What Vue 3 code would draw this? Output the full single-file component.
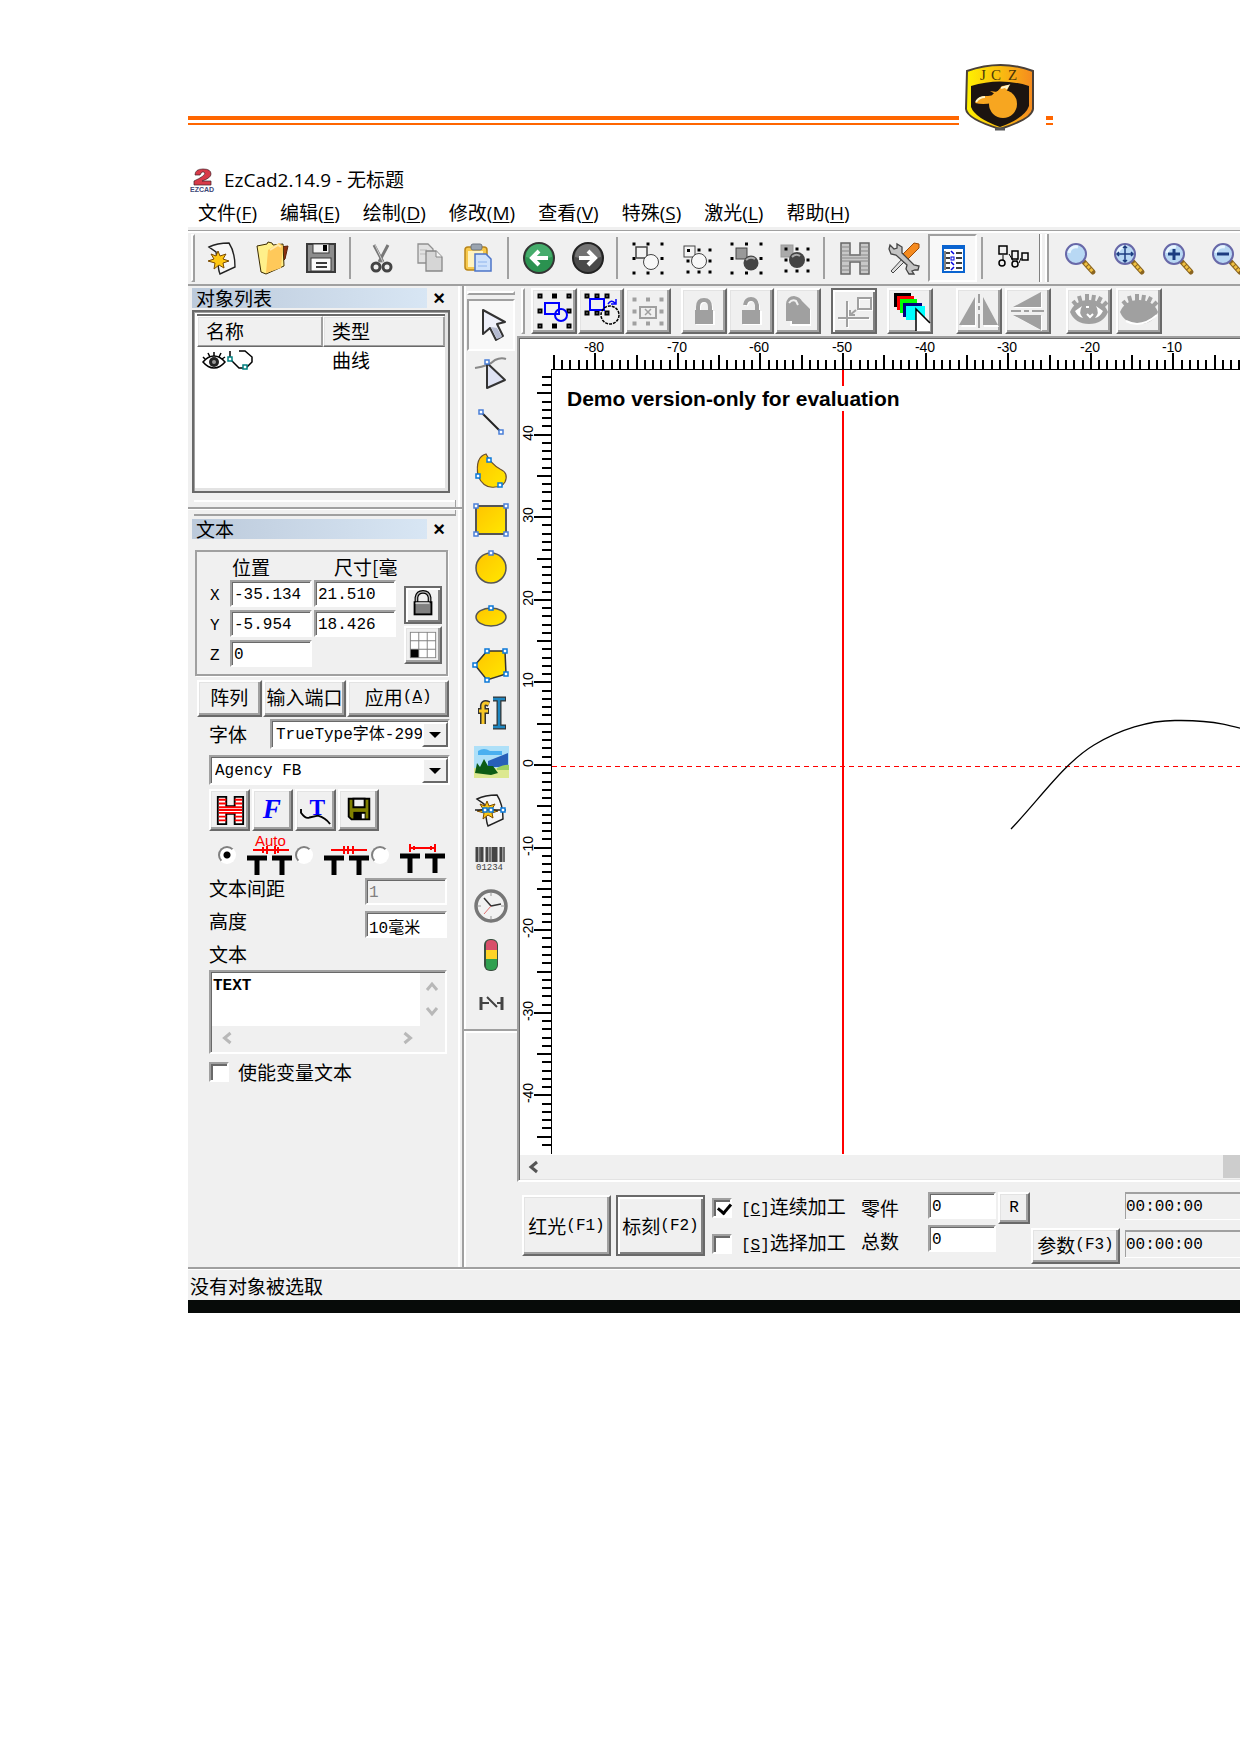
<script setup>
import { ref } from 'vue'

const square = (x, y, c = '#4a7fd8') =>
  `<rect x="${x - 2}" y="${y - 2}" width="4" height="4" fill="#fff" stroke="${c}" stroke-width="1.5"/>`
const dots = (x0, y0, x1, y1) => {
  const xs = [x0, (x0 + x1) / 2, x1]
  const ys = [y0, (y0 + y1) / 2, y1]
  let out = ''
  ys.forEach((y, r) => xs.forEach((x, c) => {
    if (r === 1 && c === 1) return
    out += `<rect x="${x - 1.5}" y="${y - 1.5}" width="3" height="3" fill="#000"/>`
  }))
  return out
}
const handles = (x0, y0, x1, y1, rows = 3) => {
  let out = ''
  const ys = rows === 3 ? [y0, (y0 + y1) / 2, y1] : [y0, y1]
  ys.forEach((y, r) => [x0, (x0 + x1) / 2, x1].forEach((x, c) => {
    if (r === 1 && c === 1 && rows === 3) return
    out += `<rect x="${x - 1.5}" y="${y - 1.5}" width="3" height="3" fill="#fff" stroke="#000" stroke-width="2"/>`
  }))
  return out
}
const star = '<path d="M11 11l2 5 6-2-3 5 6 2-6 2 1 5-5-3-5 4 1-6-7-2 6-2-3-5 5 2z" fill="#ffc814" stroke="#7a4a00" stroke-width="1"/>'
const page = '<path d="M2 5C8 2 16 1 22 1c4 6 6 14 6 24l-15 7-1-3-3-19z" fill="#f6f6f6" stroke="#222" stroke-width="1.4"/>'
const lens = (inner) =>
  `<path d="M20 20l9 10" stroke="#8a6420" stroke-width="5" stroke-linecap="round"/><path d="M21 21l8 9" stroke="#f0c040" stroke-width="3" stroke-dasharray="3 1"/><circle cx="12" cy="12" r="10" fill="#b8d8f4" stroke="#6868a8" stroke-width="2"/><path d="M5 11a7 7 0 0 1 9-6" stroke="#e8f6ff" stroke-width="3" fill="none"/>${inner}`
const padlock = (shackle) =>
  `<path d="${shackle}" fill="none" stroke="#fff" stroke-width="4" transform="translate(1 1)"/><rect x="8" y="16" width="19" height="14" fill="#fff"/><path d="${shackle}" fill="none" stroke="#a0a0a0" stroke-width="4"/><rect x="7" y="15" width="18" height="14" fill="#a0a0a0"/>`
const lashes = '<path d="M7 12L3 7M11 9L9 2M17 7V0M23 7l1-6M28 9l3-6M32 13l5-5" stroke="#a0a0a0" stroke-width="4"/>'
const floppy = (body, edge) =>
  `<path d="M2 2h28v28H2z" fill="${body}" stroke="${edge}" stroke-width="2"/><rect x="8" y="2" width="16" height="9" fill="#f2f2f2" stroke="${edge}"/><rect x="18" y="3" width="4" height="6" fill="#000"/><rect x="6" y="16" width="20" height="13" fill="#fafafa" stroke="${edge}"/><path d="M11 21h11M11 25h11" stroke="${edge}" stroke-width="2"/>`

const icons = {
  new: page + `<g transform="translate(0 -2)">${star}</g>`,
  open: '<path d="M24 5l8-1-3 13-6 6z" fill="#8a3010" stroke="#5a2008"/><path d="M1 4l10-2 1-2 4 1 1 2 10-1 1 22-18 8-5-2z" fill="#fff08a" stroke="#3a2a00"/><path d="M12 8l11-7 4 3-2 22-15 5z" fill="#ffc95a"/><path d="M14 8l8-5 3 2" stroke="#ffe9a8" stroke-width="2" fill="none"/>',
  save: floppy('#8c8c8c', '#3a3a3a'),
  cut: '<path d="M9 3l9 17M23 3l-9 17" stroke="#777" stroke-width="3"/><path d="M10 3l8 17" stroke="#ccc"/><circle cx="11" cy="25" r="4" fill="none" stroke="#444" stroke-width="3"/><circle cx="22" cy="25" r="4" fill="none" stroke="#444" stroke-width="3"/>',
  copy: '<path d="M4 2h10l5 5v14H4z" fill="#e2e2e2" stroke="#909090" stroke-width="1.3"/><path d="M6 8h7M6 12h7" stroke="#bbb"/><path d="M12 9h10l6 6v14H12z" fill="#d6d6d6" stroke="#888" stroke-width="1.3"/><path d="M22 9v6h6" fill="#f4f4f4" stroke="#888"/>',
  paste: '<rect x="2" y="5" width="22" height="23" rx="3" fill="#f7c94e" stroke="#b98518" stroke-width="1.5"/><rect x="5" y="9" width="15" height="16" fill="#fff3c0"/><rect x="8" y="2" width="11" height="6" rx="2" fill="#9aa4b0" stroke="#6c7480"/><path d="M12 12h11l5 5v12H12z" fill="#cfe2fb" stroke="#4c74c8" stroke-width="1.5"/><path d="M15 20h9M15 24h9" stroke="#8fb4ec"/>',
  back: '<circle cx="16" cy="16" r="15" fill="#2b9250" stroke="#333" stroke-width="2"/><path d="M3 15a13 13 0 0 1 26 0q-13 4-26 0" fill="#52b878" opacity=".7"/><path d="M25 16H10M16 9l-7 7 7 7" fill="none" stroke="#fff" stroke-width="4"/>',
  forward: '<circle cx="16" cy="16" r="15" fill="#4a4a4a" stroke="#222" stroke-width="2"/><path d="M3 15a13 13 0 0 1 26 0q-13 4-26 0" fill="#858585" opacity=".7"/><path d="M7 16h15M16 9l7 7-7 7" fill="none" stroke="#fff" stroke-width="4"/>',
  group1: dots(2, 2, 30, 31) + '<rect x="4" y="5" width="11" height="11" fill="#f4f4f4" stroke="#444" stroke-width="1.5"/><circle cx="19" cy="20" r="7.5" fill="#f8f8f8" stroke="#444"/>',
  group2: dots(7, 8, 29, 30) + '<rect x="3" y="4" width="11" height="11" fill="#f4f4f4" stroke="#444"/><rect x="6" y="7" width="3" height="3"/><circle cx="18" cy="19" r="7.5" fill="#f8f8f8" stroke="#444"/>',
  group3: dots(2, 2, 31, 31) + '<rect x="6" y="6" width="11" height="11" fill="#999" stroke="#444"/><circle cx="21" cy="21" r="7.5" fill="#444"/><path d="M16 18q4-4 9-1" stroke="#aaa" stroke-width="2" fill="none"/>',
  group4: '<rect x="2" y="3" width="12" height="12" fill="#aaa" stroke="#999"/><circle cx="18" cy="18" r="8" fill="#444"/><path d="M13 15q4-4 8-1" stroke="#aaa" stroke-width="2" fill="none"/>' + dots(7, 7, 29, 29),
  hatch: '<path d="M2 1h9v12h10V1h9v31h-9V20H11v12H2z" fill="#c8c8c8" stroke="#666" stroke-width="1.5"/><path d="M2 5h9M2 9h9M21 5h9M21 9h9M2 13h28M2 16h28M2 19h28M2 24h9M2 28h9M21 24h9M21 28h9" stroke="#888"/>',
  tools: '<path d="M31 2l-5-1-12 12 5 5L31 6z" fill="#f58a1e" stroke="#9c4c08"/><path d="M15 16L3 29l2 2 13-13" fill="#ddd" stroke="#444"/><path d="M2 3l4 4 3-1V2l5 3v6l12 12 5 1-1 4h-3l-3 1 2 3h-5l-3-5 1-4L8 13l-5-1-2-5z" fill="#c4c4c4" stroke="#444" stroke-width="1.3"/>',
  list: '<rect x="6" y="4" width="21" height="26" fill="#fff" stroke="#0a64d0" stroke-width="2"/><rect x="5" y="3" width="23" height="4" fill="#0a64d0"/><path d="M9 11h4M9 16h4M9 21h4M9 26h4M19 11h6M19 16h6M19 21h6M19 26h6" stroke="#000" stroke-width="1.5"/><path d="M8 9v19" stroke="#000"/><path d="M14 9l3 3M14 20l3 3M17 25l-3 3" stroke="#0000e0" stroke-width="1.5"/><rect x="14" y="15" width="3" height="3" fill="#fff" stroke="#0000e0"/>',
  nodes: '<g fill="#f0f0f0" stroke="#000" stroke-width="1.5"><path d="M6 13v7M12 12l6 10M20 16v5M24 16l-2 5" stroke-width="1"/><rect x="2" y="4" width="8" height="8"/><rect x="15" y="9" width="6" height="8"/><rect x="25" y="11" width="6" height="7"/><circle cx="5" cy="21" r="3"/><circle cx="18" cy="22" r="3"/></g>',
  zoom: lens(''),
  zoomAll: lens('<path d="M12 4v16M4 12h16M10 6l2-2 2 2M10 18l2 2 2-2M6 10l-2 2 2 2M18 10l2 2-2 2" stroke="#1c3c80" stroke-width="1.5" fill="none"/>'),
  zoomIn: lens('<path d="M12 7v11M6 12h12" stroke="#1c3c80" stroke-width="3"/>'),
  zoomOut: lens('<path d="M6 12h12" stroke="#1c3c80" stroke-width="3"/>'),
  sel1: handles(2, 1, 31, 31) + '<g fill="none" stroke="#0000ff" stroke-width="2"><rect x="7" y="8" width="14" height="11"/><circle cx="23" cy="20" r="6"/></g>',
  sel2: handles(2, 1, 22, 18, 2) + '<rect x="5" y="4" width="14" height="11" fill="#f0f0f0" stroke="#0000ff" stroke-width="2"/><circle cx="25" cy="20" r="9" fill="none" stroke="#000" stroke-width="1.5" stroke-dasharray="3 1"/><path d="M23 9q3-5 7-1M31 4v5h-5" stroke="#0000ff" stroke-width="1.5" fill="none"/>',
  sel3: dots(2, 4, 29, 28).replaceAll('#000', '#a0a0a0').replaceAll('width="3" height="3"', 'width="4" height="4"') + '<rect x="8" y="12" width="16" height="11" fill="#f0f0f0" stroke="#a0a0a0" stroke-width="2"/><path d="M13 14l6 6M19 14l-6 6" stroke="#a0a0a0" stroke-width="1.5"/>',
  lock: padlock('M10 16v-4q0-7 6-7t6 7v4'),
  unlock: padlock('M10 10q1-6 6-6t6 6v6'),
  unlockAll: '<path d="M9 15V8q0-5 5-5 4 0 6 3l9 9v16H8z" fill="#fff"/><path d="M4 13V9q1-8 8-8 6 1 8 5l8 8v15H10v-3H4z" fill="#a0a0a0"/><path d="M7 8q3-4 7-2l2 4" stroke="#f0f0f0" fill="none" stroke-width="2"/>',
  origin: '<g stroke="#fff" stroke-width="2" fill="none" transform="translate(1 1)"><path d="M0 23h31M9 6v26M20 3h13v11H20z"/></g><g stroke="#a0a0a0" stroke-width="2" fill="none"><path d="M0 23h31M9 6v26M20 3h13v11H20zM18 15l-6 5M12 15v5h5"/></g>',
  layers: '<path d="M0-2h17v14H0z"/><path d="M3 1h17v14H3z" fill="#f00"/><path d="M6 4h17v14H6z" fill="#0f0"/><path d="M9 8h19v14H9z" fill="#000080"/><path d="M12 11h19v14H12z" fill="#0ff"/><path d="M22 14v22h14v-8z" fill="#fff"/><path d="M22 36V14l14 14" stroke="#000" stroke-width="1.5" fill="none"/>',
  mirrorH: '<g transform="translate(1 1)" fill="#fff"><path d="M12 3v28H-3zM20 3v28h15z"/></g><path d="M12 2v28H-4zM20 2v28h15z" fill="#a0a0a0"/><path d="M16-1v9m0 3v4m0 4v14" stroke="#a0a0a0" stroke-width="2"/>',
  mirrorV: '<g transform="translate(1 1)" fill="#fff"><path d="M29 12V-3L1 12zM29 20v15L1 20z"/></g><path d="M29 12V-3L1 12zM29 20v15L1 20z" fill="#a0a0a0"/><path d="M-1 16h10m3 0h5m3 0h12" stroke="#a0a0a0" stroke-width="2"/>',
  eye: `<g transform="translate(-3 -1)"><path d="M0 18q5-12 19-12t19 12q-5 12-19 12T0 18z" fill="#a0a0a0"/><path d="M5 17l7-5q-4 7 1 12-5-1-8-7zM33 17l-7-5q4 7-1 12 5-1 8-7z" fill="#fff"/><path d="M16 13h3M17 20l3 3 3-3" stroke="#fff" stroke-width="2" fill="none"/>${lashes}</g>`,
  eyeOff: `<g transform="translate(-3 -1)"><path d="M0 18q5-12 19-12t19 12q-5 12-19 12T0 18z" fill="#a0a0a0"/><path d="M6 27q15 8 31-6" stroke="#fff" stroke-width="2" fill="none"/>${lashes}</g>`,
  arrow: '<path d="M8 1l22 12-8 2 6 12-7 4-6-12-7 6z" fill="#eef0fa" stroke="#333" stroke-width="2" stroke-linejoin="round"/><path d="M16 18l6 1 5 9-5 2z" fill="#b4bad0"/>',
  node: '<path d="M0 9q14-2 20-8 6-3 11-1" fill="none" stroke="#888" stroke-width="2"/><path d="M12 4v25l18-8z" fill="#dfe3f4" stroke="#333" stroke-width="2" stroke-linejoin="round"/>' + square(12, 3),
  line: '<path d="M6 4l20 20" stroke="#222" stroke-width="2"/>' + square(6, 4) + square(26, 24),
  curve: '<path d="M11-2q5 10 14 15 9 4 5 13-3 5-10 5-11 2-17-11Q0 1 11-2z" fill="url(#gold)" stroke="#6a5030" stroke-width="1.2"/>' + square(14, 4, '#0a78d8') + square(3, 20, '#0a78d8') + square(25, 29, '#0a78d8'),
  rect: '<rect x="1" y="2" width="30" height="28" fill="url(#gold)" stroke="#555" stroke-width="2"/>' + square(1, 2) + square(31, 2) + square(1, 30) + square(31, 30),
  circle: '<circle cx="16" cy="16" r="15" fill="url(#gold)" stroke="#555" stroke-width="1.5"/>' + square(16, 1),
  ellipse: '<ellipse cx="16" cy="16" rx="15" ry="9" fill="url(#gold)" stroke="#555" stroke-width="1.5"/>' + square(16, 7, '#0a78d8'),
  polygon: '<path d="M12 2l18 0 1 23-19 6L0 16z" fill="url(#gold)" stroke="#333" stroke-width="1.5"/>' + square(12, 2, '#0a78d8') + square(30, 2, '#0a78d8') + square(31, 25, '#0a78d8') + square(12, 31, '#0a78d8') + square(0, 16, '#0a78d8'),
  text: '<path d="M14 7q-7-3-6 4v16M3 14h11" fill="none" stroke="#333" stroke-width="6"/><path d="M14 7q-7-3-6 4v16M4 14h9" fill="none" stroke="#f8c828" stroke-width="3"/><path d="M18 2h13M18 30h13M24 2v28" stroke="#333" stroke-width="5"/><path d="M18 2h12M18 30h12M24 2v28" stroke="#1e86c0" stroke-width="2.5"/>',
  picture: '<rect x="-1" width="35" height="32" fill="#aee0f8"/><path d="M3 5q6-4 12 0h12v4H3z" fill="#4ab0f0"/><path d="M13 15l20-8v14H13z" fill="#2860b8"/><path d="M-1 22h35v10H-1z" fill="#dce890"/><path d="M0 27L2 17l3 4 4-8 4 7 5 0 5 7-7 2z" fill="#0c5c14"/><path d="M22 22q8-4 12-3v5H22z" fill="#9cd060"/>',
  vector: page + `<g transform="translate(1 -4)">${star}</g><path d="M0 16h31" stroke="#222" stroke-width="1.5"/>` + square(10, 16, '#0a78d8') + square(16, 16, '#0a78d8') + square(28, 16, '#0a78d8'),
  barcode: '<path d="M2 5v15M7 5v15M12 5v15M18 5v15M21 5v15M26 5v15" stroke="#444" stroke-width="3"/><path d="M5 5v15M15 5v15M29 5v15" stroke="#444" stroke-width="1.5"/><text x="1" y="28" font-family="Liberation Mono" font-size="9" fill="#444">01234</text>',
  clock: '<circle cx="16" cy="16" r="15" fill="#f2f2f2" stroke="#777" stroke-width="3.5"/><path d="M16 3v3M16 26v3M3 16h3M26 16h3" stroke="#999"/><path d="M16 16L9 8M16 16l10-2" stroke="#333" stroke-width="1.5"/><path d="M16 16l-7 8" stroke="#e07070"/>',
  light: '<rect x="9" y="0" width="14" height="32" rx="6" fill="#3a5040"/><path d="M11 11V5q0-4 5-4t6 4v6z" fill="#d8506a"/><path d="M11 11h11v9H11z" fill="#ffd428"/><path d="M11 20h11v6q0 5-6 5t-5-5z" fill="#30a050"/>',
  output: '<path d="M6 10v13M27 10v13" stroke="#444" stroke-width="3"/><path d="M6 16h8M12 10l10 10M22 16h5" stroke="#444" stroke-width="2" fill="none"/>',
  hatchRed: '<path d="M3 2h9v10h9V2h9v29h-9V20h-9v11H3z" fill="#fff" stroke="#000" stroke-width="2"/><path d="M4 5h8M4 9h8M21 5h8M21 9h8M4 13h25M4 16h25M4 19h25M4 23h8M4 27h8M21 23h8M21 27h8" stroke="#f00" stroke-width="2"/>',
  font: '<text x="5" y="25" font-family="Liberation Serif" font-size="29" font-weight="bold" font-style="italic" fill="#00f">F</text>',
  curveText: '<text x="9" y="21" font-family="Liberation Serif" font-size="25" font-weight="bold" fill="#00f">T</text><path d="M0 15v4q5 7 9 5l9-2q8 2 13 9" fill="none" stroke="#000" stroke-width="2"/>',
  saveSmall: '<path d="M5 4h22v22H8l-3-3z" fill="#808000" stroke="#000" stroke-width="2"/><path d="M10 4h12v9H10z" fill="#f0f0f0" stroke="#000" stroke-width="2"/><path d="M10 18h13v8H10z"/><path d="M19 20h3v5h-3z" fill="#fff"/>',
  padlock: '<path d="M9 13V8q1-6 7-6t7 6v5" fill="none" stroke="#000" stroke-width="4"/><path d="M9 13V8q1-6 7-6t7 6v5" fill="none" stroke="#bbb" stroke-width="1.5"/><rect x="7" y="13" width="18" height="13" fill="#808080" stroke="#000" stroke-width="2"/><path d="M8 13h15v2H8z" fill="#ccc"/>',
  anchor: '<path d="M2 2h28v28H2z" fill="#808080"/><path d="M3 3h8v8H3zM12 3h8v8h-8zM21 3h8v8h-8zM3 12h8v8H3zM12 12h8v8h-8zM21 12h8v8h-8zM12 21h8v8h-8zM21 21h8v8h-8z" fill="#fff"/><path d="M3 21h8v8H3z"/>'
}

const menus = [
  ['文件', 'F'], ['编辑', 'E'], ['绘制', 'D'], ['修改', 'M'],
  ['查看', 'V'], ['特殊', 'S'], ['激光', 'L'], ['帮助', 'H']
]
const mainTools = [
  ['new', 'open', 'save'], ['cut', 'copy', 'paste'], ['back', 'forward'],
  ['group1', 'group2', 'group3', 'group4'], ['hatch', 'tools', 'list'], ['nodes']
]
const zoomTools = ['zoom', 'zoomAll', 'zoomIn', 'zoomOut']
const viewTools = [
  ['sel1', 'sel2', 'sel3'], ['lock', 'unlock', 'unlockAll'], ['origin'], ['layers'],
  ['mirrorH', 'mirrorV'], ['eye', 'eyeOff']
]
const drawTools = ['arrow', 'node', 'line', 'curve', 'rect', 'circle', 'ellipse', 'polygon',
  'text', 'picture', 'vector', 'barcode', 'clock', 'light', 'output']
const fontTools = ['hatchRed', 'font', 'curveText', 'saveSmall']

const tickLength = (n, long) => (n % 10 === 0 ? long : n % 5 === 0 ? 14 : 9)
const xTicks = Array.from({ length: 85 }, (_, i) => {
  const n = i - 85
  return { n, x: Math.round(324 + (n + 50) * 8.26), len: tickLength(n, 16) }
})
const yTicks = Array.from({ length: 94 }, (_, i) => {
  const n = 47 - i
  return { n, y: Math.round(427 - n * 8.26), len: tickLength(n, 17) }
})
const tens = (ticks) => ticks.filter((t) => t.n % 10 === 0)

const spacing = ref('auto')
const variableText = ref(false)
const continuous = ref(true)
const selected = ref(false)
const content = ref('TEXT')
</script>

<template>
  <div class="page">
    <svg class="defs" aria-hidden="true">
      <linearGradient id="gold" x1="0" y1="0" x2="1" y2="1">
        <stop offset="0" stop-color="#ffc400" /><stop offset="1" stop-color="#ffe800" />
      </linearGradient>
      <linearGradient id="shield" x1="0" y1="0" x2="1" y2="0">
        <stop offset="0" stop-color="#fff200" /><stop offset="1" stop-color="#f58a1f" />
      </linearGradient>
    </svg>

    <header class="letterhead">
      <div class="rule long"></div>
      <svg class="logo" viewBox="0 0 70 68">
        <path d="M2 8Q36-4 68 8v38q-1 10-33 20Q2 56 1 46z" fill="url(#shield)" stroke="#4a4038" stroke-width="2" />
        <path d="M6 23Q35 14 64 23v20q-4 12-29 21Q10 55 6 44z" fill="#1c1410" />
        <path d="M30 66h10" stroke="#555" stroke-width="3" />
        <text x="15" y="17" font-family="Liberation Serif" font-size="15" fill="#4a3608">J</text>
        <text x="26" y="17" font-family="Liberation Serif" font-size="15" fill="#4a3608">C</text>
        <text x="43" y="17" font-family="Liberation Serif" font-size="15" fill="#4a3608">Z</text>
        <circle cx="38" cy="41" r="14" fill="#f7a620" />
        <path d="M10 40q4-8 13-7l7-1-3 8q-9 2-17 0zM25 28l7 1 5-6 7-1q-1 6-5 8l-7 2z" fill="#f7a620" />
        <path d="M11 39q3-5 9-5M36 25l7-2-2 3" stroke="#fff4c8" stroke-width="2" fill="none" />
      </svg>
      <div class="rule tail"></div>
    </header>

    <main class="app">
      <div class="title">
        <svg class="brand" viewBox="0 0 26 26">
          <path d="M5 8q0-6 8-6 8 0 8 5 0 4-9 7h9v4H4v-4q11-5 11-8-3-3-5 2z" fill="#d83a48" stroke="#402028" stroke-width=".7" />
          <text x="0" y="25" font-family="Liberation Sans" font-size="7" font-weight="bold" fill="#404878">EZCAD</text>
        </svg>
        <span>EzCad2.14.9 - 无标题</span>
      </div>
      <nav class="menu">
        <button v-for="[name, key] in menus" :key="key">{{ name }}(<u>{{ key }}</u>)</button>
      </nav>

      <div class="toolbar">
        <i class="grip"></i>
        <div v-for="(group, g) in mainTools" :key="g" class="group">
          <button v-for="name in group" :key="name" class="flat" :class="{ pressed: name === 'list' }" :aria-label="name">
            <svg class="icon" viewBox="0 0 32 32" v-html="icons[name]"></svg>
          </button>
        </div>
        <i class="band"></i>
        <button v-for="name in zoomTools" :key="name" class="flat" :aria-label="name">
          <svg class="icon" viewBox="0 0 32 32" v-html="icons[name]"></svg>
        </button>
      </div>

      <div class="workspace">
        <aside class="side">
          <div class="caption"><h2>对象列表</h2><button aria-label="close">×</button></div>
          <div class="list">
            <table>
              <thead><tr><th>名称</th><th>类型</th></tr></thead>
              <tbody>
                <tr>
                  <td>
                    <svg class="object" viewBox="0 0 52 22">
                      <path d="M1 12q5-6 11-6t11 6q-5 6-11 6T1 12z" fill="#fff" stroke="#000" stroke-width="1.5" />
                      <path d="M3 9L1 7M8 7L6 3M12 6V2M17 7l2-4M20 9l3-2" stroke="#000" stroke-width="1.5" />
                      <circle cx="12" cy="12" r="5" fill="#222" /><circle cx="12" cy="12" r="2" fill="#999" />
                      <path d="M28 1v8l9 9h7l6-6V7l-7-6h-6" fill="none" stroke="#000" stroke-width="1.5" />
                      <path d="M26 7h4v4h-4zM41 15h4v4h-4z" fill="#fff" stroke="#008080" stroke-width="1.5" />
                    </svg>
                  </td>
                  <td>曲线</td>
                </tr>
              </tbody>
            </table>
          </div>
          <div class="splitter"></div>
          <div class="caption"><h2>文本</h2><button aria-label="close">×</button></div>

          <section class="place">
            <div class="coords">
              <span class="c2">位置</span><span class="c3">尺寸[毫</span>
              <label for="px">X</label><input id="px" class="field" value="-35.134"><input class="field" aria-label="width" value="21.510">
              <label for="py">Y</label><input id="py" class="field" value="-5.954"><input class="field" aria-label="height" value="18.426">
              <label for="pz">Z</label><input id="pz" class="field" value="0">
            </div>
            <div class="locks">
              <button class="push default" aria-label="lock"><svg viewBox="0 0 32 32" v-html="icons.padlock"></svg></button>
              <button class="push" aria-label="anchor"><svg viewBox="0 0 32 32" v-html="icons.anchor"></svg></button>
            </div>
          </section>

          <div class="actions">
            <button class="push">阵列</button>
            <button class="push">输入端口</button>
            <button class="push">应用<span class="mono">(<u>A</u>)</span></button>
          </div>

          <div class="form">
            <div class="typeface">
              <label for="kind">字体</label>
              <div class="combo kind"><select id="kind"><option>TrueType字体-299</option></select><span class="drop"><i></i></span></div>
            </div>
            <div class="combo face"><select aria-label="font"><option>Agency FB</option></select><span class="drop"><i></i></span></div>
            <div class="fonttools">
              <button v-for="name in fontTools" :key="name" class="push" :aria-label="name">
                <svg viewBox="0 0 32 32" v-html="icons[name]"></svg>
              </button>
            </div>
            <div class="spacings">
              <label>
                <input v-model="spacing" type="radio" value="auto" aria-label="auto">
                <svg viewBox="0 0 46 44">
                  <text x="8" y="13" font-family="Liberation Sans" font-size="15" fill="#f00">Auto</text>
                  <path d="M6 17h36M20 13v8M28 13v8M16 14v6M31 14v6" stroke="#f00" stroke-width="2" />
                  <path d="M0 25h20M25 25h20M10 25v17M35 25v17" stroke="#000" stroke-width="5" />
                </svg>
              </label>
              <label>
                <input v-model="spacing" type="radio" value="edge" aria-label="edge">
                <svg viewBox="0 0 46 44">
                  <path d="M7 17h36M20 13v8M24 13v8M29 13v8" stroke="#f00" stroke-width="2" />
                  <path d="M0 25h20M25 25h20M10 25v17M35 25v17" stroke="#000" stroke-width="5" />
                </svg>
              </label>
              <label>
                <input v-model="spacing" type="radio" value="center" aria-label="center">
                <svg viewBox="0 0 46 44">
                  <path d="M10 15h25M10 11v8M35 11v8M14 13v4M31 13v4" stroke="#f00" stroke-width="2" />
                  <path d="M0 23h20M25 23h20M10 23v17M35 23v17" stroke="#000" stroke-width="5" />
                </svg>
              </label>
            </div>
            <div class="row"><label for="gap">文本间距</label><input id="gap" class="field" value="1" disabled></div>
            <div class="row"><label for="high">高度</label><input id="high" class="field" value="10毫米"></div>
            <label class="textlabel" for="content">文本</label>
            <div class="editor">
              <textarea id="content" v-model="content" wrap="off"></textarea>
              <svg class="vbar" viewBox="0 0 25 54"><path d="M7 18l5-6 5 6M7 36l5 6 5-6" /></svg>
              <svg class="hbar" viewBox="0 0 232 26"><path d="M18 7l-6 5 6 5M192 7l6 5-6 5" /></svg>
            </div>
            <label class="check"><input v-model="variableText" type="checkbox">使能变量文本</label>
          </div>
        </aside>

        <div class="palette">
          <div class="strip">
            <i></i>
            <div class="tools">
              <button v-for="name in drawTools" :key="name" :class="{ pressed: name === 'arrow' }" :aria-label="name">
                <svg class="icon" viewBox="0 0 32 32" v-html="icons[name]"></svg>
              </button>
            </div>
          </div>
        </div>

        <div class="stage">
          <div class="viewbar">
            <i class="grip"></i>
            <div v-for="(group, g) in viewTools" :key="g" :class="['set', 'set' + g]">
              <button v-for="name in group" :key="name" class="push" :class="{ default: name === 'origin' }" :aria-label="name">
                <svg class="icon" viewBox="0 0 32 32" v-html="icons[name]"></svg>
              </button>
            </div>
          </div>
          <div class="canvas">
            <svg class="drawing">
              <path d="M32 31H2000M32 31V816" stroke="#000" fill="none" stroke-width="1" shape-rendering="crispEdges" />
              <g stroke="#000" stroke-width="2" shape-rendering="crispEdges">
                <line v-for="t in xTicks" :key="'x' + t.n" :x1="t.x" :x2="t.x" :y1="31 - t.len" y2="31" />
                <line v-for="t in yTicks" :key="'y' + t.n" :x1="32 - t.len" x2="32" :y1="t.y" :y2="t.y" />
              </g>
              <g class="digits">
                <text v-for="t in tens(xTicks)" :key="t.n" :x="t.x - 1" y="14">{{ t.n }}</text>
                <text v-for="t in tens(yTicks)" :key="'v' + t.n" :transform="`translate(14 ${t.y - 2}) rotate(-90)`">{{ t.n }}</text>
              </g>
              <path d="M324 32V816" stroke="#f00" stroke-width="2" />
              <path d="M33 428H2000" stroke="#f00" stroke-width="1" stroke-dasharray="5 4" shape-rendering="crispEdges" />
              <rect x="46" y="48" width="342" height="25" fill="#fff" />
              <text class="demo" x="48" y="68">Demo version-only for evaluation</text>
              <path d="M492 491C520 462 545 425 575 407C600 392 630 382 658 382.500C700 382 715 388 760 402" fill="none" stroke="#000" stroke-width="1.3" />
            </svg>
            <div class="scroll"><svg viewBox="0 0 24 24"><path d="M17 7l-6 5 6 5" /></svg><i></i></div>
          </div>
          <div class="control">
            <button class="push big">红光<span class="mono">(F1)</span></button>
            <button class="push big default">标刻<span class="mono">(F2)</span></button>
            <div class="modes">
              <label class="check"><input v-model="continuous" type="checkbox"><span><span class="mono">[<u>C</u>]</span>连续加工</span></label>
              <label class="check"><input v-model="selected" type="checkbox"><span><span class="mono">[<u>S</u>]</span>选择加工</span></label>
            </div>
            <div class="counts">
              <div><label for="parts">零件</label><input id="parts" class="field" value="0"></div>
              <div><label for="total">总数</label><input id="total" class="field" value="0"></div>
            </div>
            <div class="extras">
              <button class="push reset mono">R</button>
              <button class="push params">参数<span class="mono">(F3)</span></button>
            </div>
            <div class="times"><output>00:00:00</output><output>00:00:00</output></div>
          </div>
        </div>
      </div>
      <footer class="status">没有对象被选取</footer>
    </main>
  </div>
</template>

<style>
body { margin: 0; background: #fff; }
</style>

<style scoped>
* { box-sizing: border-box; }
.page {
  padding-left: 188px;
  overflow: hidden;
  color: #000;
  font: 19px/20px "Noto Sans CJK SC", sans-serif;
}
button, input, select, textarea { font: inherit; color: inherit; padding: 0; margin: 0; border-radius: 0; }
button { display: flex; align-items: center; justify-content: center; border: 0; background: none; white-space: nowrap; }
svg { display: block; overflow: visible; flex: none; }
.defs { position: absolute; width: 0; height: 0; }
.mono { font: 16px/20px "Liberation Mono", monospace; }

.letterhead { display: flex; margin-right: 187px; padding-top: 63px; height: 165px; }
.rule { height: 9px; margin-top: 53px; border-top: 4px solid #ff6600; border-bottom: 2px solid #ff6600; }
.long { flex: 1; }
.tail { width: 7px; }
.logo { width: 70px; height: 68px; margin: 0 11px 0 6px; }

.title, .menu { font-family: "Open Sans", "Noto Sans CJK SC", sans-serif; }
.title { display: flex; align-items: center; gap: 8px; height: 30px; padding-left: 2px; }
.brand { width: 26px; height: 26px; }
.menu { display: flex; align-items: center; gap: 23px; height: 32px; padding: 4px 0 0 10px; }
.menu u { text-underline-offset: 2px; }

.toolbar {
  display: flex; align-items: center; height: 59px;
  background: #f0f0f0; border-bottom: 2px solid #a0a0a0;
  box-shadow: inset 0 3px #f0f0f0, inset 0 4px #a0a0a0, inset 0 6px #fff;
  padding-top: 4px; overflow: hidden;
}
.grip { flex: none; width: 4px; border: 2px solid; border-color: #fff #a0a0a0 #a0a0a0 #fff; }
.toolbar .grip { height: 48px; margin: 0 3px; }
.group { display: flex; align-items: center; }
.group + .group::before { content: ""; width: 2px; height: 42px; margin: 0 5px 0 4px; background: #a0a0a0; }
.flat { width: 49px; height: 48px; flex: none; }
.icon { width: 32px; height: 32px; }
.pressed { background: #f8f8f8; border: 2px solid; border-color: #a0a0a0 #fff #fff #a0a0a0; }
.band { flex: none; width: 10px; height: 48px; margin: 0 6px 0 2px; border-left: 1px solid #808080; border-right: 2px solid #a0a0a0; box-shadow: inset 2px 0 #fff, inset -2px 0 #fff; }

.workspace { display: flex; background: #f0f0f0; }
.side { width: 274px; flex: none; padding-top: 2px; background: linear-gradient(90deg, transparent 270px, #fff 270px, #fff 272px, transparent 272px); }
.caption { display: flex; height: 20px; margin-left: 4px; }
.caption h2 { width: 235px; margin: 0; padding-left: 4px; font-size: 19px; font-weight: 400; background: linear-gradient(90deg, #bccadb, #d8e6f4); }
.caption button { width: 24px; font: bold 20px/20px "Liberation Sans", sans-serif; }
.list { height: 183px; margin: 2px 12px 0 4px; border: 2px solid #696969; background: #fff; box-shadow: inset 1px 1px #a0a0a0, inset -3px -3px #e3e3e3; padding: 2px 3px 3px 3px; }
table { width: 100%; border-collapse: separate; border-spacing: 0; font-family: "Open Sans", "Noto Sans CJK SC", sans-serif; border-top: 2px solid #696969; }
th { height: 31px; padding: 0 0 0 8px; text-align: left; font-weight: 400; background: #f0f0f0; border: 1px solid; border-color: #fff #a0a0a0 #696969 #fff; box-shadow: inset -1px -1px #a0a0a0, inset 1px 1px #e3e3e3; }
th:first-child { width: 126px; }
td { height: 28px; padding: 0 0 0 9px; }
td:first-child { padding-left: 5px; }
.object { width: 52px; height: 22px; }
.splitter {
  height: 16px; margin: 7px 0 3px;
  background:
    linear-gradient(#a0a0a0, #a0a0a0) 0 7px / 274px 2px no-repeat,
    linear-gradient(#fff, #fff) 0 9px / 274px 1px no-repeat,
    linear-gradient(#fff, #fff) 6px 0 / 261px 2px no-repeat,
    linear-gradient(#a0a0a0, #a0a0a0) 6px 14px / 262px 2px no-repeat,
    linear-gradient(#a0a0a0, #a0a0a0) 267px 0 / 1px 16px no-repeat;
}

.field { width: 82px; height: 27px; border: 2px solid; border-color: #a0a0a0 #fff #fff #a0a0a0; box-shadow: inset 1px 1px #696969; background: #fff; padding: 2px 1px 0 2px; font: 16px/20px "Liberation Mono", "Noto Sans CJK SC", monospace; }
.field:disabled { background: #f0f0f0; color: #808080; }
.push { background: #f0f0f0; border: 2px solid; border-color: #fff #696969 #696969 #fff; box-shadow: inset -2px -2px #a0a0a0, inset 1px 1px #e3e3e3; }
.push.default { border-color: #696969; box-shadow: inset 2px 2px #fff, inset -2px -2px #808080; }

.place { display: flex; height: 126px; margin: 11px 14px 4px 7px; padding: 5px 4px 0 11px; border: 2px solid #a0a0a0; box-shadow: 1px 1px #fff; justify-content: space-between; }
.coords { display: grid; grid-template-columns: 20px 82px 82px; grid-template-rows: 20px 27px 27px 27px; column-gap: 2px; row-gap: 3px; align-items: center; }
.coords label { font: 16px/20px "Liberation Mono", monospace; padding: 4px 0 0 2px; }
.c2 { grid-column: 2; padding-left: 2px; }
.c3 { grid-column: 3; padding-left: 20px; white-space: nowrap; }
.locks { display: flex; flex-direction: column; gap: 2px; padding-top: 29px; }
.locks button { width: 38px; height: 38px; }
.locks svg { width: 30px; height: 30px; }
.actions { display: flex; gap: 1px; margin: 0 13px 0 9px; }
.actions .push { height: 37px; flex: 1 1 64px; padding-bottom: 3px; }
.actions .push:nth-child(2) { flex-basis: 83px; }
.actions .push:nth-child(3) { flex-basis: 101px; }

.form { padding: 2px 12px 0 21px; }
.typeface { display: flex; align-items: center; justify-content: space-between; }
.combo { display: flex; height: 30px; border: 2px solid; border-color: #a0a0a0 #fff #fff #a0a0a0; box-shadow: inset 1px 1px #696969; background: #fff; padding: 1px 0 0 1px; overflow: hidden; }
.kind { width: 180px; }
.face { margin-top: 6px; }
.combo select { flex: 1; min-width: 0; appearance: none; border: 0; background: none; padding-left: 3px; font: 16px/20px "Liberation Mono", "Noto Sans CJK SC", monospace; overflow: hidden; text-overflow: clip; }
.drop { width: 26px; display: flex; align-items: center; justify-content: center; background: #f0f0f0; border: 2px solid; border-color: #fff #696969 #696969 #fff; }
.drop i { border: 6px solid transparent; border-top-color: #000; border-bottom: 0; }
.fonttools { display: flex; gap: 2px; margin-top: 4px; }
.fonttools .push { width: 41px; height: 42px; }
.fonttools svg { width: 30px; height: 30px; }
.spacings { display: flex; height: 47px; padding: 0 0 0 9px; justify-content: space-between; margin-right: 4px; }
.spacings label { display: flex; align-items: center; gap: 11px; }
.spacings svg { width: 46px; height: 44px; }
.spacings input { appearance: none; width: 18px; height: 18px; border: 2px solid; border-color: #808080 #fff #fff #808080; border-radius: 50%; background: #fff; }
.spacings input:checked { background: radial-gradient(#000 3px, #fff 4px); }
.row { display: flex; justify-content: space-between; margin: 0 3px 6px 0; height: 27px; }
.textlabel { display: block; margin-top: 6px; height: 26px; }
.editor { display: grid; grid-template-columns: 1fr 25px; grid-template-rows: 54px 26px; height: 84px; margin-right: 3px; border: 2px solid; border-color: #a0a0a0 #fff #fff #a0a0a0; box-shadow: inset 1px 1px #696969; padding-left: 1px; }
textarea { border: 0; resize: none; background: #fff; margin-top: 1px; padding: 3px 1px 1px; font: bold 16px/20px "Liberation Mono", monospace; overflow: hidden; min-width: 0; width: 100%; }
.vbar { width: 25px; height: 54px; }
.hbar { grid-column: 1 / 3; width: 100%; height: 26px; }
.vbar path, .hbar path { fill: none; stroke: #b8b8b8; stroke-width: 3; }
.check { display: flex; align-items: center; gap: 9px; height: 20px; white-space: nowrap; }
.form .check { margin-top: 8px; }
.check input { appearance: none; flex: none; width: 20px; height: 20px; border: 2px solid; border-color: #a0a0a0 #fff #fff #a0a0a0; box-shadow: inset 2px 2px #696969; background: #fff; }
.check input:checked::after { content: ""; display: block; width: 6px; height: 10px; margin: 1px 0 0 6px; border: solid #000; border-width: 0 3px 3px 0; transform: rotate(40deg); }

.palette { width: 55px; flex: none; border-left: 2px solid #a0a0a0; box-shadow: inset 2px 0 #fff; }
.strip { height: 745px; border-bottom: 2px solid #a0a0a0; box-shadow: 0 2px #fff; padding: 5px 2px 0 3px; }
.strip > i { display: block; height: 4px; border: 2px solid; border-color: #fff #a0a0a0 #a0a0a0 #fff; }
.tools { display: flex; flex-direction: column; height: 728px; margin-top: 4px; }
.tools button { flex: 1; width: 48px; }

.stage { flex: 1; min-width: 0; }
.viewbar { display: flex; height: 50px; padding-top: 2px; overflow: hidden; }
.viewbar .grip { height: 46px; margin-left: 4px; margin-right: 6px; }
.set { display: flex; gap: 1px; flex: none; }
.set .push { width: 46px; height: 46px; }
.set1, .set2, .set3 { margin-left: 10px; }
.set4 { margin-left: 23px; gap: 3px; }
.set5 { margin-left: 15px; gap: 4px; }
.canvas { border: 2px solid; border-color: #a0a0a0 #fff #fff #a0a0a0; border-right: 0; background: #fff; box-shadow: inset 1px 1px #696969; overflow: hidden; }
.drawing { width: 100%; height: 817px; overflow: hidden; }
.digits { font: 14px "Liberation Sans", sans-serif; text-anchor: middle; }
.demo { font: bold 21px "Liberation Sans", sans-serif; }
.scroll { display: flex; justify-content: space-between; height: 25px; margin-left: 1px; background: #f0f0f0; border-bottom: 1px solid #e3e3e3; }
.scroll svg { width: 24px; height: 24px; }
.scroll path { fill: none; stroke: #555; stroke-width: 3; }
.scroll i { width: 17px; height: 23px; background: #cdcdcd; }

.control { display: flex; align-items: flex-start; height: 85px; padding: 10px 0 0 5px; overflow: hidden; }
.big { width: 89px; height: 61px; margin: 3px 5px 0 0; flex: none; }
.modes { display: flex; flex-direction: column; gap: 16px; width: 149px; flex: none; margin: 6px 0 0 2px; }
.counts { display: flex; flex-direction: column; gap: 6px; flex: none; }
.counts div { display: flex; }
.counts label { width: 67px; padding-top: 6px; }
.counts .field { width: 68px; }
.extras { display: flex; flex-direction: column; gap: 4px; width: 122px; flex: none; margin-left: 2px; align-items: flex-end; }
.reset { width: 32px; height: 32px; align-self: flex-start; }
.params { width: 89px; height: 36px; padding-bottom: 2px; }
.times { display: flex; flex-direction: column; gap: 11px; flex: 1; min-width: 0; margin-left: 5px; }
.times output { height: 27px; border: solid #a0a0a0; border-width: 2px 0 0 1px; box-shadow: 0 1px #fff; font: 16px/26px "Liberation Mono", monospace; }
.status { height: 46px; padding: 7px 0 0 2px; background: #f0f0f0; border-top: 2px solid #a0a0a0; border-bottom: 13px solid #070b09; box-shadow: inset 0 1px #fff; line-height: 20px; }
</style>
